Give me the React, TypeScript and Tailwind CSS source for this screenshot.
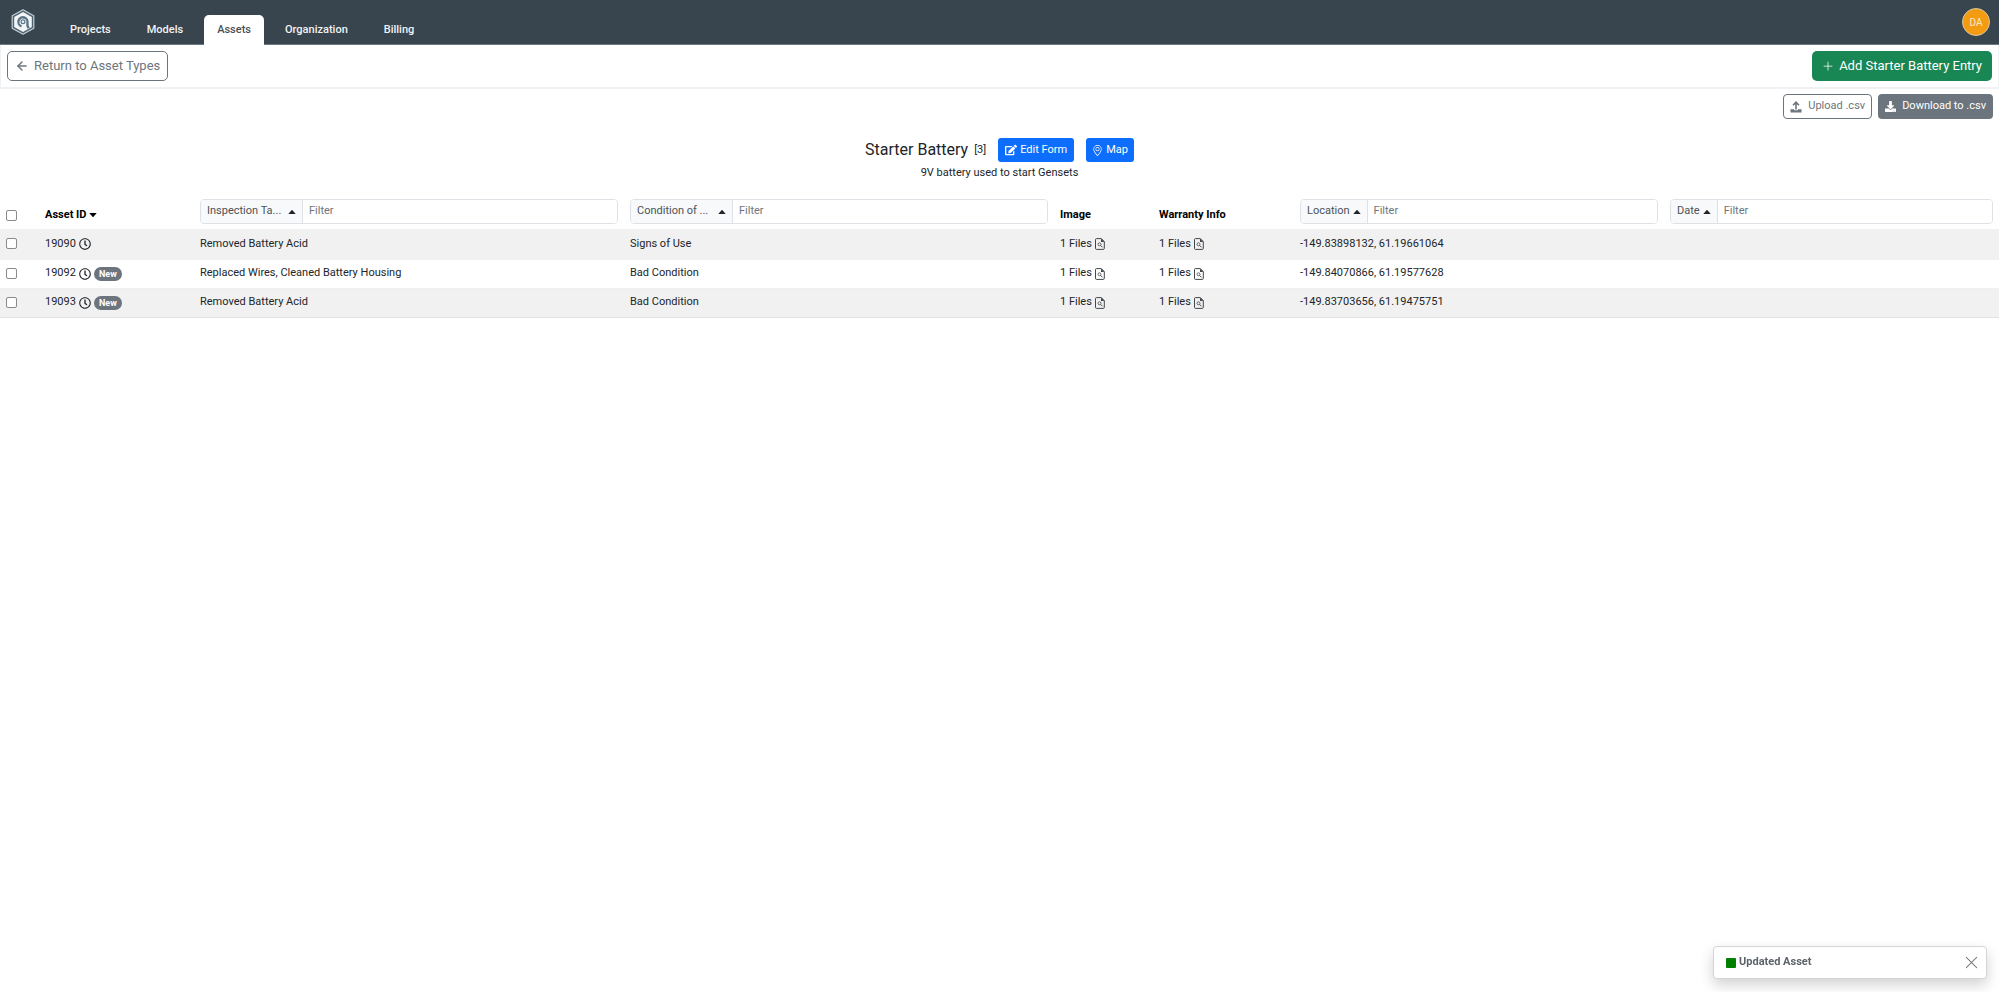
import React from "react";
import { BsGeoAlt, BsPlusLg, BsXLg } from "react-icons/bs";
import { FaDownload, FaEdit, FaRegClock } from "react-icons/fa";
import { LuArrowLeft } from "react-icons/lu";

type Row = {
  id: string;
  isNew: boolean;
  task: string;
  condition: string;
  location: string;
};

const rows: Row[] = [
  { id: "19090", isNew: false, task: "Removed Battery Acid", condition: "Signs of Use", location: "-149.83898132, 61.19661064" },
  { id: "19092", isNew: true, task: "Replaced Wires, Cleaned Battery Housing", condition: "Bad Condition", location: "-149.84070866, 61.19577628" },
  { id: "19093", isNew: true, task: "Removed Battery Acid", condition: "Bad Condition", location: "-149.83703656, 61.19475751" },
];

const navItems = ["Projects", "Models", "Assets", "Organization", "Billing"];

function Logo() {
  return (
    <svg viewBox="0 0 24 26" className="h-[26px] w-6" aria-label="Home" role="img">
      <path d="M12 .8 22.8 6.8v12.4L12 25.2 1.2 19.2V6.8z" fill="#4f6470" stroke="#c3ced4" strokeWidth="1.2" strokeLinejoin="round" />
      <path d="M12 3 20.8 7.9v10.2L12 23 3.2 18.1V7.9z" fill="#f3f6f7" />
      <path d="M10.500 17.300a4.600 4.600 0 1 1 5.900-3.300c-.3 1.500-.2 2.600 1.200 5.200" fill="none" stroke="#5b7687" strokeWidth="2.400" />
      <circle cx="12" cy="12.800" r="1.900" fill="none" stroke="#5b7687" strokeWidth="1.200" />
    </svg>
  );
}

function UploadIcon() {
  return (
    <svg viewBox="0 0 12 12" className="size-3" fill="none" stroke="currentColor" aria-hidden="true">
      <path d="M6 8.500V1.500M3 4.200 6 1.200l3 3" strokeWidth="1.600" />
      <path d="M.5 8.300h3.700v1h3.600v-1h3.700v3.200H.5z" fill="currentColor" stroke="none" />
    </svg>
  );
}

function FileSearchIcon() {
  return (
    <svg viewBox="0 0 10 12" className="h-3 w-[10px] text-[#40464c]" fill="none" stroke="currentColor" aria-hidden="true">
      <path d="M1.500.6h4.800l3 3v6.800a1 1 0 0 1-1 1H1.500a1 1 0 0 1-1-1V1.600a1 1 0 0 1 1-1z" />
      <path d="M6 .6l3.300 3.300H6z" fill="currentColor" stroke="none" />
      <circle cx="4.500" cy="6.300" r="1.500" strokeWidth=".8" />
      <path d="M5.600 7.400 7.500 9.300" />
    </svg>
  );
}

function Caret({ down = false }: { down?: boolean }) {
  return (
    <svg viewBox="0 0 8 4" className="h-1 w-2 shrink-0" fill="currentColor" aria-hidden="true">
      <path d={down ? "M.3 0h7.400L4.500 3.700q-.5.500-1 0z" : "M.3 4h7.400L4.500.300q-.5-.5-1 0z"} />
    </svg>
  );
}

function FilterHeader({ label, wide = false }: { label: string; wide?: boolean }) {
  return (
    <div className="flex h-[25px] overflow-hidden rounded border border-[#dee2e6] font-normal">
      <button
        type="button"
        className={
          wide
            ? "flex w-[102px] shrink-0 items-center justify-between border-r border-[#dee2e6] bg-[#f8f9fa] px-[6px] text-[#4b5258]"
            : "flex shrink-0 items-center gap-[3px] border-r border-[#dee2e6] bg-[#f8f9fa] px-[6px] text-[#4b5258]"
        }
      >
        <span>{label}</span>
        <span className="text-[#212529]">
          <Caret />
        </span>
      </button>
      <input
        aria-label={`Filter ${label}`}
        placeholder="Filter"
        className="min-w-0 flex-1 bg-white px-[6px] text-[#212529] outline-none placeholder:text-[#6c757d]"
      />
    </div>
  );
}

function Check({ label }: { label: string }) {
  return (
    <input
      type="checkbox"
      aria-label={label}
      className="block size-[11px] appearance-none rounded-[2px] border border-[#8a8a8a] bg-white checked:bg-[#0d6efd]"
    />
  );
}

function Files() {
  return (
    <a href="#files" className="flex items-center gap-[3px]">
      1 Files
      <FileSearchIcon />
    </a>
  );
}

export default function App() {
  return (
    <div className="flex min-h-screen flex-col bg-white font-['Roboto',sans-serif] text-[11px] text-[#212529]">
      <header className="flex h-[45px] items-end justify-between border-b border-[#6c7a84] bg-[#38454f]">
        <div className="flex h-full items-end">
          <a href="#home" className="mr-[19px] ml-[11px] self-center">
            <Logo />
          </a>
          <nav className="flex items-end gap-[6px]">
            {navItems.map((item) => (
              <a
                key={item}
                href={`#${item.toLowerCase()}`}
                className={
                  item === "Assets"
                    ? "-mb-px flex h-[30px] items-center rounded-t-[5px] bg-white px-[13px] pt-px font-medium text-[#495057]"
                    : "flex h-[29px] items-center px-[15px] pt-[2px] font-medium text-[#f1f3f4] first:pl-4"
                }
              >
                {item}
              </a>
            ))}
          </nav>
        </div>
        <button
          type="button"
          className="mr-[9px] flex size-[28px] items-center justify-center self-center rounded-full border border-[#d9c7a0] bg-[#f39c12] text-[10px] text-[#fde8c4]"
        >
          DA
        </button>
      </header>

      <div className="flex h-[44px] items-center justify-between border-x border-b-2 border-[#f0f1f2] px-[6px]">
        <button
          type="button"
          className="flex h-[30px] items-center gap-[5px] rounded-[5px] border border-[#6c757d] px-[7px] text-[13px] text-[#6c757d]"
        >
          <LuArrowLeft className="size-[14px]" strokeWidth={2.5} />
          Return to Asset Types
        </button>
        <button
          type="button"
          className="flex h-[30px] items-center gap-[5px] rounded-[5px] bg-[#198754] px-[10px] text-[13px] text-white"
        >
          <BsPlusLg className="size-3" />
          Add Starter Battery Entry
        </button>
      </div>

      <div className="flex justify-end gap-[6px] px-[6px] pt-[5px]">
        <button type="button" className="flex h-[25px] items-center gap-[6px] rounded border border-[#6c757d] px-[6px] text-[#6c757d]">
          <UploadIcon />
          Upload .csv
        </button>
        <button type="button" className="flex h-[25px] items-center gap-[6px] rounded bg-[#6c757d] px-[7px] text-white">
          <FaDownload className="size-[11px]" />
          Download to .csv
        </button>
      </div>

      <section className="mt-[19px] flex flex-col items-center">
        <div className="flex items-center">
          <h1 className="text-[16px]">Starter Battery</h1>
          <span className="ml-[6px]">[3]</span>
          <button type="button" className="ml-3 flex h-6 items-center gap-[3px] rounded-[3px] bg-[#0d6efd] px-[7px] text-white">
            <FaEdit className="size-3" />
            Edit Form
          </button>
          <button type="button" className="ml-3 flex h-6 items-center gap-[3px] rounded-[3px] bg-[#0d6efd] px-[6px] text-white">
            <BsGeoAlt className="size-[11px]" />
            Map
          </button>
        </div>
        <p className="mt-[3px] leading-4">9V battery used to start Gensets</p>
      </section>

      <table className="mt-[18px] w-full table-fixed border-collapse text-left">
        <colgroup>
          <col className="w-[39px]" />
          <col className="w-[155px]" />
          <col className="w-[430px]" />
          <col className="w-[430px]" />
          <col className="w-[99px]" />
          <col className="w-[141px]" />
          <col className="w-[370px]" />
          <col />
        </colgroup>
        <thead>
          <tr className="h-[30px] align-top text-black">
            <th className="px-[6px] pt-[11px]"><Check label="Select all assets" /></th>
            <th className="px-[6px] pt-[8px]">
              <button type="button" className="flex items-center gap-[3px] font-bold">
                Asset ID
                <Caret down />
              </button>
            </th>
            <th className="px-[6px]"><FilterHeader label="Inspection Ta..." wide /></th>
            <th className="px-[6px]"><FilterHeader label="Condition of ..." wide /></th>
            <th className="px-[6px] pt-[8px]">Image</th>
            <th className="px-[6px] pt-[8px]">Warranty Info</th>
            <th className="px-[6px]"><FilterHeader label="Location" /></th>
            <th className="px-[6px]"><FilterHeader label="Date" /></th>
          </tr>
        </thead>
        <tbody>
          {rows.map((row) => (
            <tr
              key={row.id}
              className="h-[29px] border-b border-[#eeeff0] first:h-[30px] last:border-[#dee2e6] odd:bg-[#f1f1f1]"
            >
              <td className="px-[6px]"><Check label={`Select asset ${row.id}`} /></td>
              <td className="px-[6px]">
                <div className="flex items-center gap-[3px]">
                  {row.id}
                  <FaRegClock className="size-3" />
                  {row.isNew && (
                    <span className="rounded-full bg-[#6c757d] px-[5px] text-[9px] leading-[14px] font-bold text-white">New</span>
                  )}
                </div>
              </td>
              <td className="px-[6px]">{row.task}</td>
              <td className="px-[6px]">{row.condition}</td>
              <td className="px-[6px]"><Files /></td>
              <td className="px-[6px]"><Files /></td>
              <td className="px-[6px]">{row.location}</td>
              <td className="px-[6px]" />
            </tr>
          ))}
        </tbody>
      </table>

      <div
        role="status"
        className="fixed right-3 bottom-[13px] flex h-[33px] w-[274px] items-center gap-[3px] rounded border border-[#d5d5d5] bg-white pr-[7px] pl-3 shadow-[0_6px_14px_rgba(0,0,0,0.18)]"
      >
        <span className="size-[10px] rounded-[1px] bg-[#008000]" />
        <strong className="flex-1 font-bold text-[#5c636a]">Updated Asset</strong>
        <button type="button" aria-label="Close">
          <BsXLg className="size-[15px] text-[#777]" />
        </button>
      </div>
    </div>
  );
}
